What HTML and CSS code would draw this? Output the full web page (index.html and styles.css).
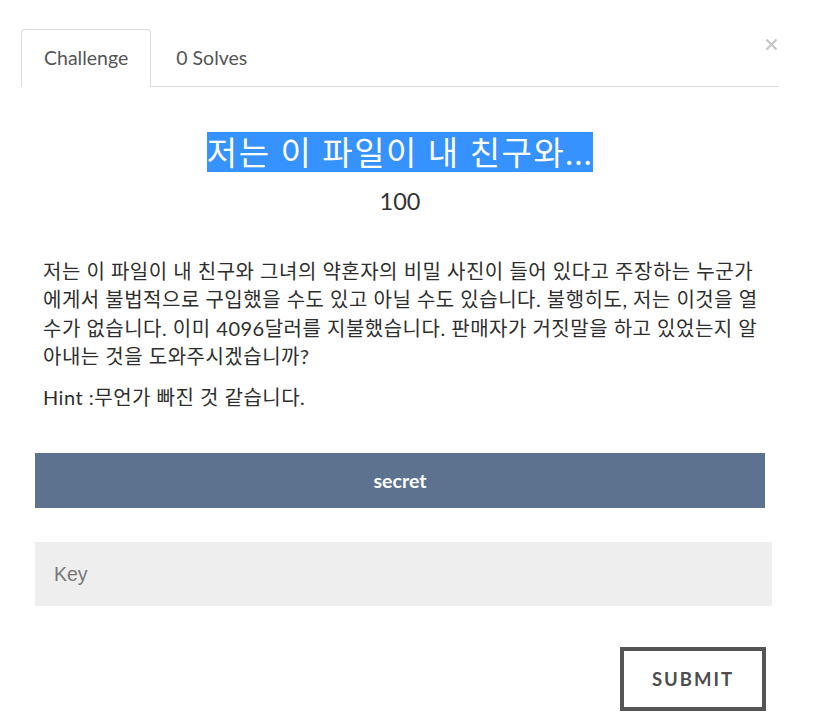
FILE: index.html
```html
<!DOCTYPE html>
<html lang="ko">
<head>
<meta charset="utf-8">
<title>Challenge</title>
<link rel="stylesheet" href="styles.css">
</head>
<body>
<div class="modal">
  <button class="close" aria-label="Close">
    <svg width="13" height="13" viewBox="0 0 13 13"><path d="M1.5 1.5 L11.5 11.5 M11.5 1.5 L1.5 11.5" stroke="#c9c9c9" stroke-width="2.4" fill="none"/></svg>
  </button>
  <ul class="tabs">
    <li class="tab active">Challenge</li>
    <li class="tab">0 Solves</li>
  </ul>
  <div class="content">
    <h2 class="title"><span class="sel">저는 이 파일이 내 친구와...</span></h2>
    <h3 class="value">100</h3>
    <div class="desc">
      <p>저는 이 파일이 내 친구와 그녀의 약혼자의 비밀 사진이 들어 있다고 주장하는 누군가에게서 불법적으로 구입했을 수도 있고 아닐 수도 있습니다. 불행히도, 저는 이것을 열 수가 없습니다. 이미 4096달러를 지불했습니다. 판매자가 거짓말을 하고 있었는지 알아내는 것을 도와주시겠습니까?</p>
      <p class="hint">Hint :무언가 빠진 것 같습니다.</p>
    </div>
    <a class="file">secret</a>
    <div class="key"><input type="text" placeholder="Key"></div>
    <div class="actions"><button class="submit">SUBMIT</button></div>
  </div>
</div>
</body>
</html>
```
FILE: styles.css
```css
html, body {
  margin: 0;
  padding: 0;
  background: #fff;
}
body {
  font-family: "Lato", "Noto Sans CJK KR", sans-serif;
  color: #333;
}
.modal {
  position: relative;
  width: 758px;
  padding: 29px 0 0 21px;
}
.close {
  position: absolute;
  top: 38px;
  left: 765px;
  border: 0;
  background: none;
  padding: 0;
  width: 13px;
  height: 13px;
  display: flex;
}
.tabs {
  list-style: none;
  margin: 0;
  padding: 0;
  display: flex;
  gap: 2px;
  border-bottom: 1px solid #dddddd;
}
.tab {
  height: 56px;
  line-height: 56px;
  padding: 0 22px;
  font-size: 19.5px;
  color: #555;
  border: 1px solid transparent;
  border-bottom: 0;
  margin-bottom: -1px;
  border-radius: 4px 4px 0 0;
}
.tab.active {
  border-color: #dddddd;
  background: #fff;
  height: 57px;
}
.content {
  display: flex;
  flex-direction: column;
}
.title {
  margin: 46px 0 0;
  text-align: center;
  font-size: 33px;
  font-weight: 400;
  line-height: 1.2;
  letter-spacing: 1.5px;
}
.sel {
  background: #3592fe;
  color: #fff;
}
.value {
  margin: 14px 0 0;
  text-align: center;
  font-size: 23.5px;
  font-weight: 400;
  line-height: 1.2;
  color: #333;
}
.desc {
  margin: 42px 0 0 22px;
  width: 726px;
  font-size: 20px;
  line-height: 28.5px;
  letter-spacing: 0.5px;
  word-break: break-all;
  color: #2e2e2e;
}
.desc p {
  margin: 0 0 12px;
}
.file {
  display: flex;
  align-items: center;
  justify-content: center;
  margin: 30px 0 0 14px;
  width: 730px;
  height: 55px;
  background: #5c728f;
  color: #fff;
  font-weight: 700;
  font-size: 19.5px;
}
.key {
  margin: 34px 0 0 14px;
  width: 737px;
}
.key input {
  box-sizing: border-box;
  width: 100%;
  height: 64px;
  border: 0;
  background: #eeeeee;
  padding: 0 19px;
  font-family: "Liberation Sans", Arial, sans-serif;
  font-size: 19.5px;
  color: #555;
  outline: none;
}
.key input::placeholder {
  color: #777;
}
.actions {
  display: flex;
  justify-content: flex-end;
  width: 745px;
  margin-top: 41px;
}
.submit {
  box-sizing: border-box;
  width: 146px;
  height: 64px;
  border: 4px solid #555;
  background: #fff;
  font-family: "Lato", sans-serif;
  font-weight: 700;
  font-size: 18.5px;
  letter-spacing: 2px;
  color: #4d4d4d;
}
```
